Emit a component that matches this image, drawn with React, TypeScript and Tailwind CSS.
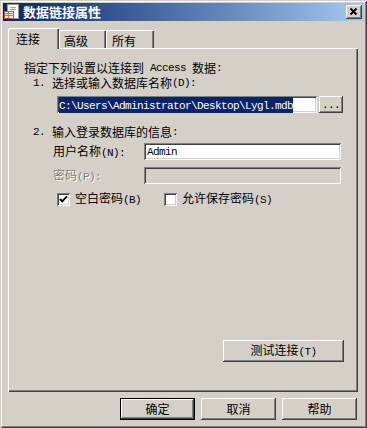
import React from "react";

// ── Classic 3D bevels ─────────────────────────────────────────────────────────

const RAISED = "shadow-[inset_-1px_-1px_#404040,inset_1px_1px_#ffffff,inset_-2px_-2px_#808080]";
const SUNKEN = "shadow-[inset_1px_1px_#808080,inset_-1px_-1px_#ffffff,inset_2px_2px_#404040,inset_-2px_-2px_#d4d0c8]";

function Mono({ children }: { children: React.ReactNode }) {
  return <span className="font-['Liberation_Mono',monospace] text-[11px] tracking-[-0.6px]">{children}</span>;
}

function Check({ checked }: { checked?: boolean }) {
  return (
    <span className={`w-[13px] h-[13px] shrink-0 bg-white ${SUNKEN} flex items-center justify-center`}>
      {checked && (
        <svg width="13" height="13" viewBox="0 0 13 13">
          <polyline points="3,6 5.2,8.4 10,3.4" fill="none" stroke="#000" strokeWidth="2" />
        </svg>
      )}
    </span>
  );
}

function Button({ label, isDefault, className }: { label: React.ReactNode; isDefault?: boolean; className?: string }) {
  const bevel = isDefault
    ? "shadow-[inset_0_0_0_1px_#000000,inset_-2px_-2px_#404040,inset_2px_2px_#ffffff,inset_-3px_-3px_#808080]"
    : RAISED;
  return (
    <div className={`h-[22px] flex items-center justify-center bg-[#d4d0c8] text-[12px] leading-[14px] text-black ${bevel} ${className ?? ""}`}>
      {label}
    </div>
  );
}

function TitleIcon() {
  return (
    <svg width="16" height="16" viewBox="0 0 16 16">
      <rect x="3.5" y="0.5" width="11" height="14" fill="#ffffff" stroke="#9a9a9a" />
      <line x1="6" y1="3.5" x2="12" y2="3.5" stroke="#a0a0a0" />
      <line x1="6" y1="5.5" x2="12" y2="5.5" stroke="#a0a0a0" />
      <rect x="0.5" y="7.5" width="9" height="7" fill="#ffffff" stroke="#d0501c" />
      <line x1="1" y1="9.5" x2="9" y2="9.5" stroke="#e07840" />
      <line x1="1" y1="11.5" x2="9" y2="11.5" stroke="#e07840" />
      <line x1="4.5" y1="8" x2="4.5" y2="14" stroke="#e07840" />
    </svg>
  );
}

// ── Main ──────────────────────────────────────────────────────────────────────

export default function App() {
  return (
    <div className="w-[367px] h-[428px] bg-[#d4d0c8] p-[3px] flex flex-col font-['Noto_Sans_CJK_SC','Noto_Sans',sans-serif] text-black shadow-[inset_1px_1px_#d4d0c8,inset_-1px_-1px_#404040,inset_2px_2px_#ffffff,inset_-2px_-2px_#808080] overflow-hidden">
      {/* Title bar */}
      <div className="h-[18px] flex items-center pl-[1px] pr-[2px] bg-linear-to-r from-[#0a246a] to-[#a6caf0]">
        <TitleIcon />
        <span className="ml-[3px] text-[13px] leading-[16px] font-bold text-white">数据链接属性</span>
        <div className={`ml-auto w-[16px] h-[14px] bg-[#d4d0c8] ${RAISED} flex items-center justify-center`}>
          <svg width="16" height="14" viewBox="0 0 16 14">
            <path d="M4.5 3.5 L10.5 9.5 M10.5 3.5 L4.5 9.5" stroke="#000" strokeWidth="1.8" />
          </svg>
        </div>
      </div>

      <div className="flex flex-col pl-[5px] pr-[6px]">
        {/* Tabs */}
        <div className="h-[20px] mt-[7px] flex items-end">
          <div className="relative z-10 -mb-[1px] w-[51px] h-[21px] pl-[8px] pt-[4px] bg-[#d4d0c8] rounded-tl-[2px] text-[12px] leading-[14px] shadow-[inset_1px_1px_#ffffff,inset_-1px_0_#404040,inset_-2px_0_#808080]">
            连接
          </div>
          <div className="w-[47px] h-[18px] pl-[5px] pt-[4px] rounded-tl-[2px] text-[12px] leading-[14px] shadow-[inset_1px_1px_#ffffff,inset_-1px_0_#404040,inset_-2px_0_#808080]">
            高级
          </div>
          <div className="w-[48px] h-[18px] pl-[6px] pt-[4px] rounded-tl-[2px] text-[12px] leading-[14px] shadow-[inset_1px_1px_#ffffff,inset_-1px_0_#404040,inset_-2px_0_#808080]">
            所有
          </div>
        </div>

        {/* Panel */}
        <div className="h-[344px] flex flex-col pt-[12px] pb-[30px] text-[12px] leading-[14px] shadow-[inset_1px_1px_#ffffff,inset_-1px_-1px_#404040,inset_-2px_-2px_#808080]">
          <div className="h-[16px] pl-[16px] flex items-center whitespace-pre">
            指定下列设置以连接到<Mono> Access </Mono>数据<Mono>:</Mono>
          </div>
          <div className="h-[14px] pl-[25px] flex items-center whitespace-pre">
            <Mono>1. </Mono>
            <span className="ml-[1px]">选择或输入数据库名称</span>
            <Mono>(D):</Mono>
          </div>

          <div className="mt-[6px] pl-[49px] flex items-center">
            <div className={`w-[260px] h-[17px] bg-white ${SUNKEN} pl-[2px] flex items-center`}>
              <span className="bg-[#0a246a] text-white leading-[13px] whitespace-pre">
                <Mono>C:\Users\Administrator\Desktop\Lygl.mdb</Mono>
              </span>
            </div>
            <div className={`ml-[2px] w-[24px] h-[17px] ${RAISED} flex items-center justify-center`}>
              <Mono>...</Mono>
            </div>
          </div>

          <div className="mt-[11px] h-[16px] pl-[25px] flex items-center whitespace-pre">
            <Mono>2. </Mono>
            <span className="ml-[1px]">输入登录数据库的信息</span>
            <Mono>:</Mono>
          </div>

          <div className="mt-[3px] pl-[45px] flex items-center">
            <div className="w-[91px] whitespace-pre">
              用户名称<Mono>(N):</Mono>
            </div>
            <div className={`w-[197px] h-[17px] bg-white ${SUNKEN} pl-[3px] flex items-center`}>
              <Mono>Admin</Mono>
            </div>
          </div>

          <div className="mt-[7px] pl-[45px] flex items-center">
            <div className="w-[91px] whitespace-pre text-[#808080] [text-shadow:1px_1px_0_#ffffff]">
              密码<Mono>(P):</Mono>
            </div>
            <div className={`w-[197px] h-[17px] bg-[#d4d0c8] ${SUNKEN}`} />
          </div>

          <div className="mt-[7px] pl-[49px] flex items-center">
            <Check checked />
            <span className="ml-[5px] whitespace-pre">空白密码<Mono>(B)</Mono></span>
            <div className="ml-[23px] flex items-center">
              <Check />
              <span className="ml-[5px] whitespace-pre">允许保存密码<Mono>(S)</Mono></span>
            </div>
          </div>

          <div className="mt-auto flex justify-end pr-[14px]">
            <Button className="w-[121px]" label={<span className="whitespace-pre">测试连接<Mono>(T)</Mono></span>} />
          </div>
        </div>

        {/* Dialog buttons */}
        <div className="mt-[6px] flex justify-end gap-[6px] pr-[1px]">
          <Button className="w-[75px]" label="确定" isDefault />
          <Button className="w-[75px]" label="取消" />
          <Button className="w-[75px]" label="帮助" />
        </div>
      </div>
    </div>
  );
}
